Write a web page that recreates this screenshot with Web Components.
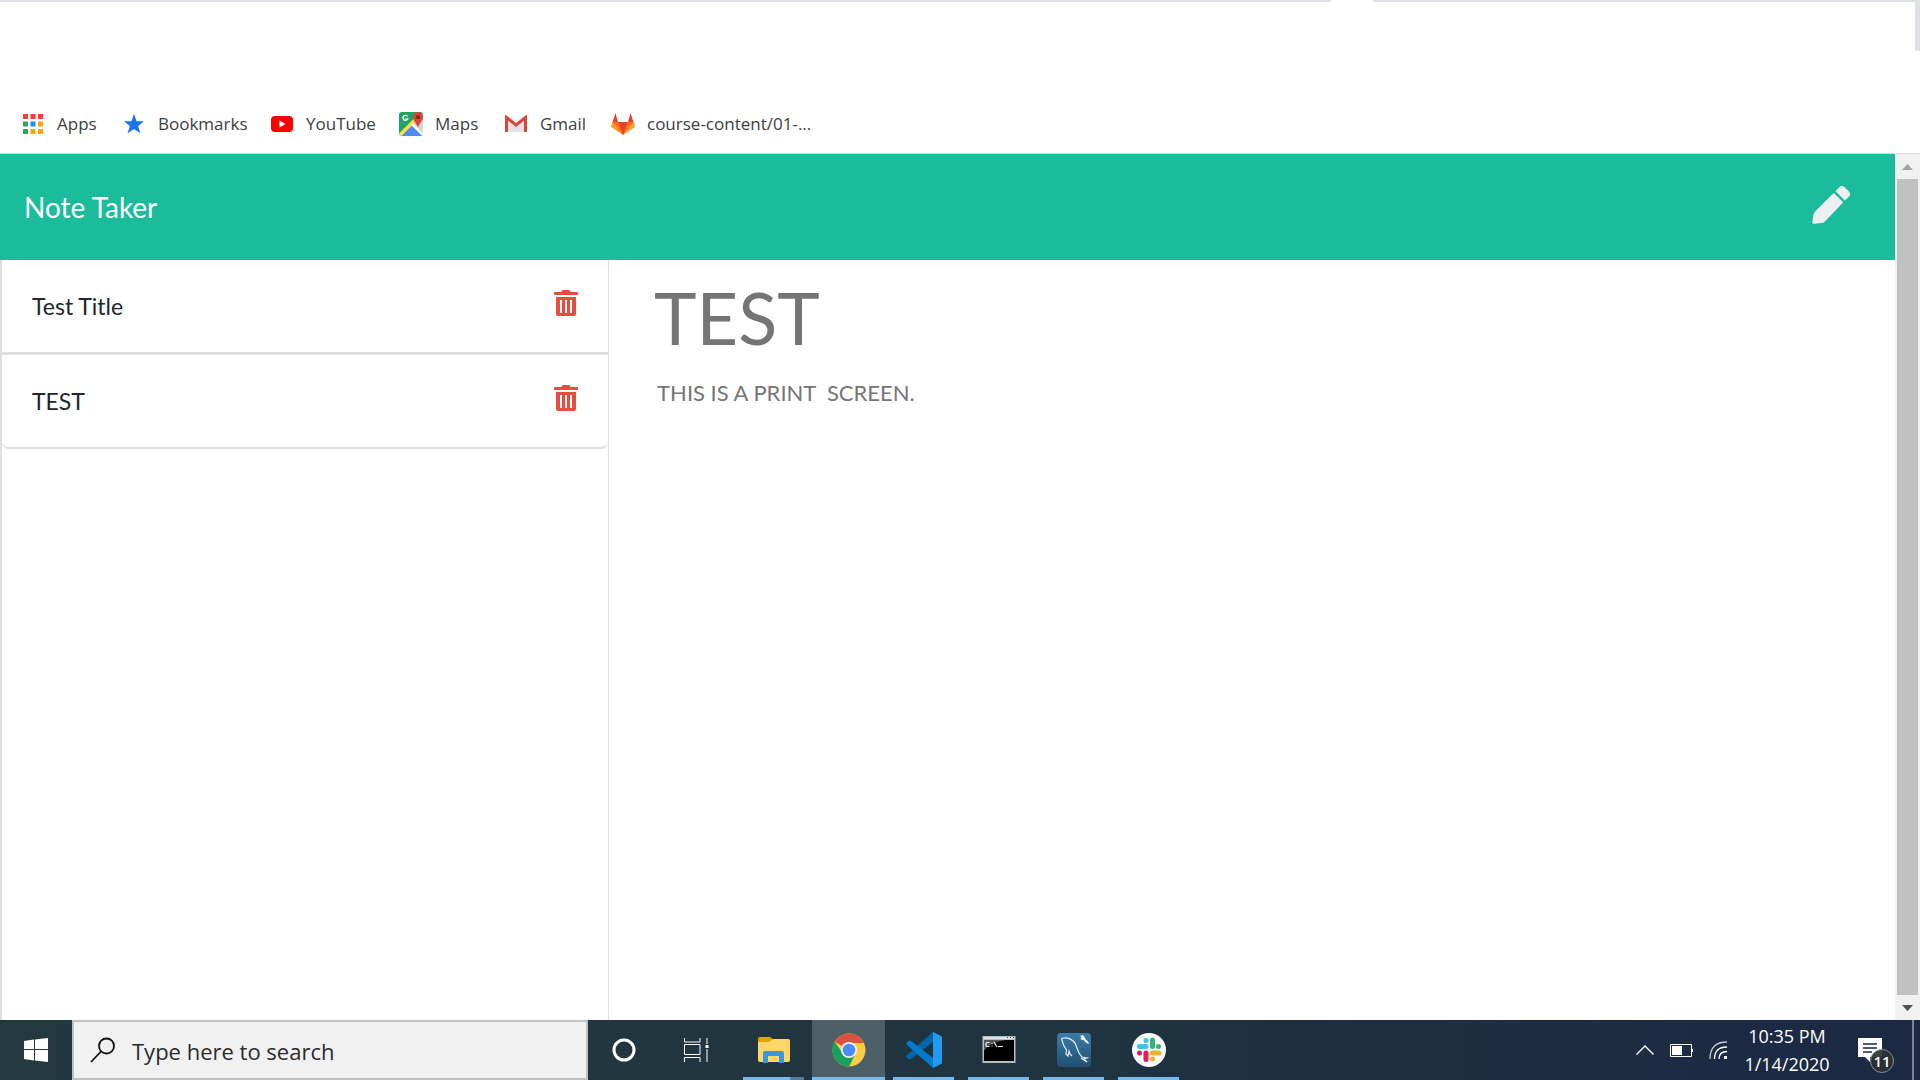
<!DOCTYPE html>
<html lang="en">
<head>
<meta charset="utf-8">
<title>Note Taker</title>
<style>
html,body{margin:0;height:100%}
body{background:#fff;font-family:"Open Sans",sans-serif;overflow:hidden}
</style>
</head>
<body>
<desktop-screen></desktop-screen>

<template id="t-screen">
<style>
:host{display:flex;flex-direction:column;height:100vh}
.viewport{flex:1;min-height:0;display:flex}
note-app{flex:1;min-width:0}
</style>
<browser-chrome></browser-chrome>
<div class="viewport"><note-app></note-app><scroll-bar></scroll-bar></div>
<task-bar></task-bar>
</template>

<template id="t-chrome">
<style>
:host{display:block;border-bottom:1px solid #dadce0;background:#fff}
.strip{display:grid;grid-template-columns:1331fr 42px 547fr;height:2px}
.strip i{background:#dee1e6}
.strip i:nth-child(2){background:#fff}
.tool{height:49px;border-right:5px solid #dee1e6}
nav{display:flex;align-items:center;height:50px;padding:2px 20px}
.space{height:48px}
</style>
<div class="strip"><i></i><i></i><i></i></div>
<div class="tool"></div>
<div class="space"></div>
<nav>
<book-mark style="--w:101px">Apps<svg slot="icon" width="26" height="24" viewBox="0 0 26 24"><g fill="#ff3e30"><path d="M3 2h5v5H3zM10.500 2h5v5h-5zM18 2h5v5h-5z"/></g><path fill="#2da55d" d="M3 9.500h5v5H3zM3 17h5v5H3z"/><path fill="#1a8cff" d="M10.500 9.500h5v5h-5z"/><path fill="#f9a60a" d="M18 9.500h5v5h-5zM10.500 17h5v5h-5zM18 17h5v5h-5z"/></svg></book-mark>
<book-mark style="--w:148px">Bookmarks<svg slot="icon" width="26" height="24" viewBox="0 0 26 24"><path fill="#1a73e8" d="M13 2l2.600 7.300H23l-5.900 4.700 2.300 7.300-6.400-4.400-6.400 4.400L8.900 14 3 9.300h7.400z"/></svg></book-mark>
<book-mark style="--w:129px">YouTube<svg slot="icon" width="26" height="24" viewBox="0 0 26 24"><rect x="2" y="4" width="22" height="16" rx="4" fill="#f00"/><path fill="#fff" d="M10.500 8.500v7l6-3.500z"/></svg></book-mark>
<book-mark style="--w:105px">Maps<svg slot="icon" width="26" height="24" viewBox="0 0 26 24"><clipPath id="m"><rect x="1" width="24" height="24" rx="3"/></clipPath><g clip-path="url(#m)"><path fill="#1fa463" d="M1 0h24v24H1z"/><path fill="#d5d5d5" d="M14 13L25 2v22h-1z"/><path fill="#4c8bf5" d="M2 24l12-12 12 12z"/><path d="M0 25L19 6" stroke="#ffdc48" stroke-width="3.500"/><path d="M14 12l12 12" stroke="#fff" stroke-width="2.500"/></g><path fill="#db4437" d="M20 0a5 5 0 0 1 5 5c0 4-4 6-5 11-1-5-5-7-5-11a5 5 0 0 1 5-5z"/><circle cx="20" cy="5" r="2" fill="#7b231e"/><path d="M9.500 4.400A2.500 2.500 0 1 0 9.700 7H7.500" fill="none" stroke="#fff" stroke-width="1.400"/></svg></book-mark>
<book-mark style="--w:107px">Gmail<svg slot="icon" width="26" height="24" viewBox="0 0 26 24"><rect x="2" y="4" width="22" height="16" rx="1" fill="#e3e3e3"/><path fill="#f8f8f8" d="M4 4h18l-9 8z"/><path fill="none" stroke="#d8453a" stroke-width="3" d="M3.500 20V5.500L13 13l9.500-7.500V20"/></svg></book-mark>
<book-mark>course-content/01-...<svg slot="icon" width="26" height="24" viewBox="0 0 26 24"><path fill="#fca326" d="M2 10l-1 5 12 8 12-8-1-5z"/><path fill="#fc6d26" d="M2.500 10H8l5 13zM23.500 10H18l-5 13z"/><path fill="#e24329" d="M8 10h10l-5 13zM2.500 10L5.500 1 8 10zM23.500 10l-3-9L18 10z"/></svg></book-mark>
</nav>
</template>

<template id="t-bookmark">
<style>
:host{display:block;min-width:var(--w,auto);margin-bottom:4px}
a{display:flex;align-items:center;gap:11px;color:#3c4043;text-decoration:none;font-size:17px;line-height:24px;white-space:nowrap}
::slotted(svg){display:block;flex:none}
</style>
<a href="#"><slot name="icon"></slot><span><slot></slot></span></a>
</template>

<template id="t-app">
<style>
:host{display:flex;flex-direction:column;font-family:Lato,sans-serif}
header{display:flex;align-items:center;justify-content:space-between;height:106px;padding:0 45px 0 24px;background:#1abc9c;box-sizing:border-box}
header a{color:#fff;font-size:28px;line-height:42px;text-decoration:none}
button{border:0;background:none;padding:0;display:block}
header button{margin-bottom:2px}
main{flex:1;display:grid;grid-template-columns:9fr 19fr;min-height:0}
aside{border:solid #dfdfdf;border-width:0 1px 0 2px}
ul{list-style:none;margin:0;padding:0;border-bottom:2px solid #dfdfdf;border-radius:0 0 7px 7px}
note-item + note-item{border-top:3px solid #dfdfdf}
section{padding:17px 45px}
input,textarea{display:block;width:100%;border:0;padding:0;background:none;color:#757575;font-family:inherit;resize:none;outline:0;box-sizing:border-box}
input{font-size:72px;height:80px}
textarea{font-size:22px;line-height:36px;height:300px;padding:0 3px;margin-top:18px}
</style>
<header><a href="#">Note Taker</a><button aria-label="New note"><svg width="38" height="38" viewBox="0 0 512 512"><path fill="#ecf0f1" d="M498 142l-46 46c-5 5-12 5-17 0L324 77c-5-5-5-12 0-17l46-46c19-19 49-19 68 0l60 60c19 19 19 49 0 68zM284 100L52 332Q24 360 22 380L4 484c-3 16 8 27 24 24l96-8q30-2 50-22L412 228c5-5 5-12 0-17L301 100c-5-5-12-5-17 0z"/></svg></button></header>
<main>
<aside><ul><note-item>Test Title</note-item><note-item>TEST</note-item></ul></aside>
<section><input aria-label="Note title" value="TEST" readonly><textarea aria-label="Note text" readonly>THIS IS A PRINT  SCREEN.</textarea></section>
</main>
</template>

<template id="t-note">
<style>
:host{display:flex;justify-content:space-between;align-items:center;height:92px;padding:0 30px;color:#212529;font-size:23px;line-height:36px;box-sizing:content-box}
button{border:0;background:none;padding:0;margin-bottom:6px}
svg{display:block}
</style>
<span><slot></slot></span>
<button aria-label="Delete note"><svg width="24" height="26" viewBox="0 0 24 26"><path fill="#e74c3c" fill-rule="evenodd" d="M1 2h6l2-2h6l2 2h6q1 0 1 1v2H0V3q0-1 1-1zM2 7h20v17q0 2-2 2H4q-2 0-2-2zM6 10v13h2V10zM11 10v13h2V10zM16 10v13h2V10z"/></svg></button>
</template>

<template id="t-scroll">
<style>
:host{display:flex;flex-direction:column;width:25px;background:#f1f1f1}
svg{display:block;height:25px;width:25px;flex:none}
i{flex:1;background:#c1c1c1;margin:0 2px}
</style>
<svg viewBox="0 0 25 25"><path fill="#a3a3a3" d="M7 16l5.500-6 5.500 6z"/></svg><i></i><svg viewBox="0 0 25 25"><path fill="#505050" d="M7 10l5.500 6 5.500-6z"/></svg>
</template>

<template id="t-task">
<style>
:host{display:flex;height:60px;background:linear-gradient(90deg,#223940,#20343f 50%,#1b2943);color:#fff}
button{border:0;padding:0;background:none;color:inherit;display:grid;place-items:center}
svg{display:block}
.start{width:72px}
label{display:flex;align-items:center;gap:16px;width:516px;box-sizing:border-box;border:2px solid #c1c1c1;background:#f1f1f1;padding:0 16px}
input{flex:1;min-width:0;border:0;background:none;outline:0;padding:2px 0 0;font:22px/30px "Open Sans",sans-serif;color:#2b2b2b}
input::placeholder{color:#2b2b2b;opacity:1}
.sys{width:72px}
.apps{display:flex;gap:2px;padding-left:5px}
.tray{margin-left:auto;display:flex;align-items:center}
.tray button{height:60px}
.icons{display:flex;gap:16px;align-items:center}
.clock{display:flex;flex-direction:column;width:120px;text-align:center;font-size:18px;line-height:28px}
.center{position:relative;width:46px}
.badge{position:absolute;left:23px;top:29px;width:24px;height:24px;box-sizing:border-box;border:1px solid #8b8f95;border-radius:50%;background:rgba(45,48,54,.93);font:600 15px/22px "Open Sans",sans-serif;text-align:center}
.desk{width:6px;height:60px;border-left:2px solid #7a8494;margin-left:19px}
</style>
<button class="start" aria-label="Start"><svg width="24" height="24" viewBox="0 0 24 24"><path fill="#fff" d="M0 3l10-1.400V11H0zM11 1.500L24 0v11H11zM0 12h10v10.500L0 21zM11 12h13v12l-13-1.500z"/></svg></button>
<label><svg width="26" height="26" viewBox="0 0 26 26" fill="none" stroke="#111" stroke-width="1.800"><circle cx="16.500" cy="9" r="7.500"/><path d="M11 14.500L1 25"/></svg><input aria-label="Search" placeholder="Type here to search"></label>
<button class="sys" aria-label="Cortana"><svg width="24" height="24" viewBox="0 0 24 24"><circle cx="12" cy="12" r="10" fill="none" stroke="#fff" stroke-width="3"/></svg></button>
<button class="sys" aria-label="Task view"><svg width="25" height="24" viewBox="0 0 25 24" fill="none" stroke="#fff"><path d="M.5 0v4h15.500V0M.5 6.500H16v10H.5zM.5 24v-4.500H16V24M23 0v6M23 11v13"/><path fill="#fff" stroke="none" d="M21.500 7h3v3h-3z"/></svg></button>
<div class="apps">
<task-app class="split" label="File Explorer"><svg width="34" height="36" viewBox="0 0 34 36"><path fill="#e2a20a" d="M1 7q0-2 2-2h10l3 2-2 4H1z"/><path fill="#ffd768" d="M1 10h11l4-3h15q2 0 2 2v19q0 2-2 2H3q-2 0-2-2z"/><path fill="#3997dc" d="M6 31V21q0-2 2-2h17q2 0 2 2v10h-5v-7H11v7z"/></svg></task-app>
<task-app class="active" label="Google Chrome"><svg width="34" height="36" viewBox="0 0 34 36"><circle cx="17" cy="18" r="16.500" fill="#ffcd42"/><path fill="#dd5144" d="M17 18L2.700 9.700A16.500 16.500 0 0 1 31.800 11H17z"/><path fill="#16a15f" d="M2.700 9.700A16.500 16.500 0 0 0 17 34.500l6.500-12.500L17 25 11 21.500z"/><circle cx="17" cy="18" r="8" fill="#f1f1f1"/><circle cx="17" cy="18" r="6.300" fill="#4c8bf5"/></svg></task-app>
<task-app label="Visual Studio Code"><svg width="36" height="36" viewBox="0 0 36 36"><path fill="#0065a9" d="M1 23L27 0v10L5 27q-1.500 1-3-.5L.5 25q-1-1 .5-2z"/><path fill="#007acc" d="M1 13L27 36V26L5 9q-1.500-1-3 .5L.5 11q-1 1 .5 2z"/><path fill="#1f9cf0" d="M27 0l8 4q1 .5 1 1.500v25q0 1-1 1.500l-8 4z"/></svg></task-app>
<task-app label="Command Prompt"><svg width="34" height="36" viewBox="0 0 34 36"><path fill="#b8bcbf" d="M.5 4h33v27H.5z"/><path fill="#dce6ee" d="M1.500 5h31v2h-31z"/><path fill="#000" d="M2 8h30v21H2z"/><path fill="#555" d="M2 8h22Q8 10 2 19z"/><path fill="none" stroke="#eee" stroke-width="1.200" d="M7.500 10.500H5q-1 0-1 1v2q0 1 1 1h2.500M10 11v1M10 13.500v1M12 10l3 5M16 14.500h5"/><path stroke="#345" d="M25 5.500h1M28 5.500h1M31 5.500h1"/></svg></task-app>
<task-app label="MySQL Workbench"><svg width="34" height="36" viewBox="0 0 34 36"><defs><linearGradient id="q" x2="0" y2="1"><stop stop-color="#3c7ca8"/><stop offset="1" stop-color="#205071"/></linearGradient></defs><rect y="1" width="34" height="34" rx="4" fill="url(#q)"/><path fill="none" stroke="#e5eef4" stroke-width="1.200" d="M15 24l-2-2-1-3-1 5-2-2 .5-4L7 14 4.500 7 6 6q7-1 12 5l4 10 3 4 5 1-3 1 3 3-6-4"/><path d="M25 5l5 5" stroke="#fff" stroke-width="2.200"/><path fill="#fff" d="M23 4l3-1 2 3-2 2-3-1 2-1zM29 8l3 3-1 1-3-3z"/></svg></task-app>
<task-app label="Slack"><svg width="34" height="36" viewBox="0 0 34 36"><circle cx="17" cy="18" r="17" fill="#f8f8f8"/><g stroke-width="5" stroke-linecap="round"><path stroke="#36c5f0" d="M7.500 14.500h6.500M14 8.500v0"/><path stroke="#2eb67d" d="M20.500 8v6.500M26.500 14.500v0"/><path stroke="#ecb22e" d="M20.500 21h6.500M20.500 27v0"/><path stroke="#e01e5a" d="M14 21v6.500M7.500 21v0"/></g></svg></task-app>
</div>
<div class="tray">
<div class="icons">
<svg width="18" height="10" viewBox="0 0 18 10" fill="none" stroke="#fff" stroke-width="1.400"><path d="M.5 9.500L9 1l8.500 8.500"/></svg>
<svg width="23" height="13" viewBox="0 0 23 13"><path fill="none" stroke="#fff" d="M.5.500h21v12H.5z"/><path fill="#fff" d="M2 2h10v9H2zM22 5h1v3h-1z"/></svg>
<svg width="18" height="18" viewBox="0 0 18 18" fill="none" stroke="#fff" stroke-width="1.300"><path stroke="#c4c9d1" d="M1 18Q1 1 18 1"/><path d="M5.500 18Q5.500 6 18 6M10 18q0-7.500 8-7.500"/><path fill="#fff" stroke="none" d="M15 15h3v3h-3z"/></svg>
</div>
<div class="clock"><span>10:35 PM</span><span>1/14/2020</span></div>
<button class="center" aria-label="Notifications"><svg width="24" height="24" viewBox="0 0 24 24"><path fill="#fff" d="M0 0h24v19H12v5l-5-5H0z"/><path stroke="#1b2943" stroke-width="1.300" d="M5 6h14M5 10h14M5 14h9"/></svg><span class="badge">11</span></button>
<div class="desk"></div>
</div>
</template>

<template id="t-taskapp">
<style>
:host{display:block;width:73px;height:60px}
:host(.active) button{background:#4d5e66}
button{width:100%;height:60px;border:0;padding:0;background:none;display:grid;grid-template-rows:57px 3px;justify-items:center;align-items:center}
.line{display:flex;width:61px;height:3px}
:host(.active) .line{width:100%}
.line i{flex:1;background:#76b9ed}
.line b{display:none;width:14px;background:#517f9f}
:host(.split) .line b{display:block}
::slotted(svg){display:block;margin-top:3px}
</style>
<button><slot></slot><span class="line"><i></i><b></b></span></button>
</template>

<script>
const define = (name, id) => customElements.define(name, class extends HTMLElement {
  constructor() {
    super();
    this.attachShadow({ mode: 'open' }).append(document.getElementById(id).content.cloneNode(true));
  }
  connectedCallback() {
    const label = this.getAttribute('label');
    if (label) this.shadowRoot.querySelector('button').setAttribute('aria-label', label);
    if (name === 'note-item') this.setAttribute('role', 'listitem');
  }
});
define('book-mark', 't-bookmark');
define('browser-chrome', 't-chrome');
define('note-item', 't-note');
define('note-app', 't-app');
define('scroll-bar', 't-scroll');
define('task-app', 't-taskapp');
define('task-bar', 't-task');
define('desktop-screen', 't-screen');
</script>
</body>
</html>
